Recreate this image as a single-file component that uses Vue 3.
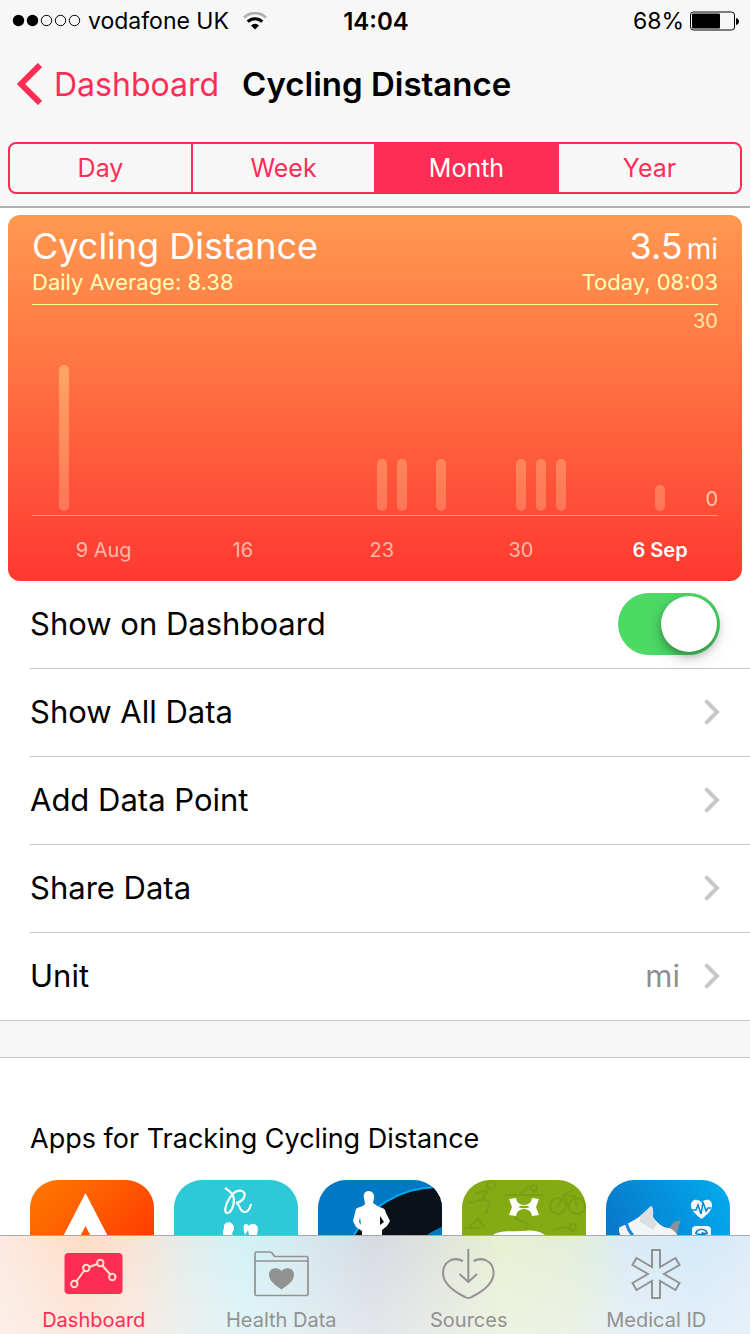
<script setup>
import { ref } from 'vue'

const ranges = ['Day', 'Week', 'Month', 'Year']
const activeRange = ref('Month')
const showOnDashboard = ref(true)

// day is the column in the 31 day grid, height is in pixels
const bars = [
  { day: 1, height: 146 },
  { day: 17, height: 52 },
  { day: 18, height: 52 },
  { day: 20, height: 52 },
  { day: 24, height: 52 },
  { day: 25, height: 52 },
  { day: 26, height: 52 },
  { day: 31, height: 26 }
]

const dates = [
  { day: 3, label: '9 Aug' },
  { day: 10, label: '16' },
  { day: 17, label: '23' },
  { day: 24, label: '30' },
  { day: 31, label: '6 Sep', current: true }
]

const rows = [
  { label: 'Show All Data' },
  { label: 'Add Data Point' },
  { label: 'Share Data' },
  { label: 'Unit', value: 'mi' }
]

const activeTab = ref('Dashboard')
</script>

<template>
  <div class="screen">
    <header class="header">
      <div class="status">
        <div class="status-left">
          <svg class="signal" width="70" height="14" viewBox="0 0 70 14">
            <circle cx="6.5" cy="6.5" r="5.7" fill="#000" />
            <circle cx="20.5" cy="6.5" r="5.7" fill="#000" />
            <g fill="none" stroke="#000">
              <circle cx="34.5" cy="6.5" r="5.2" />
              <circle cx="48.5" cy="6.5" r="5.2" />
              <circle cx="62.5" cy="6.5" r="5.2" />
            </g>
          </svg>
          <span>vodafone UK</span>
          <svg class="wifi" width="24" height="18" viewBox="0 0 24 18">
            <path d="M1 5.5a16 16 0 0 1 22 0" fill="none" stroke="#b0b0b0" stroke-width="2.8" />
            <path d="M4.7 9.6a10.5 10.5 0 0 1 14.6 0" fill="none" stroke="#000" stroke-width="3" />
            <path d="M8 13.4a5.8 5.8 0 0 1 8 0L12 17.5z" fill="#000" />
          </svg>
        </div>
        <span class="time">14:04</span>
        <div class="status-right">
          <span>68%</span>
          <svg width="50" height="20" viewBox="0 0 50 20">
            <rect x="0.5" y="1" width="44" height="18" rx="3" fill="none" stroke="#000" />
            <rect x="2" y="2.5" width="28" height="15" rx="1" fill="#000" />
            <path d="M46 7c4 1 4 6 0 7z" fill="#000" />
          </svg>
        </div>
      </div>

      <nav class="nav">
        <a href="#" class="back">
          <svg width="26" height="42" viewBox="0 0 26 42">
            <path d="M24 2L5 21l19 19" fill="none" stroke="currentColor" stroke-width="6" />
          </svg>
          <span>Dashboard</span>
        </a>
        <h1>Cycling Distance</h1>
      </nav>

      <div class="segments">
        <button
          v-for="range in ranges"
          :key="range"
          type="button"
          :class="{ active: range === activeRange }"
          :aria-pressed="range === activeRange"
          @click="activeRange = range"
        >
          {{ range }}
        </button>
      </div>
    </header>

    <main>
      <section class="card">
        <div class="card-line">
          <h2>Cycling Distance</h2>
          <p class="total">3.5<span>mi</span></p>
        </div>
        <div class="card-line sub">
          <span>Daily Average: 8.38</span>
          <span>Today, 08:03</span>
        </div>
        <div class="plot">
          <div class="bars">
            <div
              v-for="bar in bars"
              :key="bar.day"
              class="bar"
              :style="{ gridColumn: bar.day, height: bar.height + 'px' }"
            ></div>
          </div>
          <div class="scale">
            <span>30</span>
            <span class="low">0</span>
          </div>
        </div>
        <div class="dates">
          <span
            v-for="date in dates"
            :key="date.day"
            :class="{ current: date.current }"
            :style="{ gridColumn: date.day }"
          >{{ date.label }}</span>
        </div>
      </section>

      <ul class="list">
        <li>
          <label class="row">
            <span class="label">Show on Dashboard</span>
            <input v-model="showOnDashboard" type="checkbox" class="switch" />
          </label>
        </li>
        <li v-for="row in rows" :key="row.label">
          <button type="button" class="row">
            <span class="label">{{ row.label }}</span>
            <span v-if="row.value" class="value">{{ row.value }}</span>
            <svg width="18" height="28" viewBox="0 0 18 28">
              <path d="M3.5 2.5L15 14 3.5 25.5" fill="none" stroke="#c7c7cc" stroke-width="4" />
            </svg>
          </button>
        </li>
      </ul>
      <div class="divider"></div>

      <section class="apps">
        <h3>Apps for Tracking Cycling Distance</h3>
        <div class="app-row">
          <a href="#" aria-label="Ride tracker">
            <svg viewBox="0 0 124 124">
              <defs>
                <linearGradient id="orange" x1="0" y1="0" x2="1" y2="1">
                  <stop offset="0" stop-color="#ff7b00" />
                  <stop offset="0.7" stop-color="#ff3f00" />
                </linearGradient>
              </defs>
              <rect width="124" height="124" fill="url(#orange)" />
              <path d="M55.5 13L86 72H69L55.5 46 42 72H25z" fill="#fff" />
            </svg>
          </a>
          <a href="#" aria-label="Running log">
            <svg viewBox="0 0 124 124">
              <rect width="124" height="124" fill="#2dc9d7" />
              <path
                d="M51 8c5 3 9 7 9 12 0 6-3 13-7 13-3 0-2-8 2-14 4-7 9-9 13-8 5 2 3 10-6 12 4 0 3 9 9 9 3 0 5-4 6-8"
                fill="none"
                stroke="#fff"
                stroke-width="2.2"
              />
              <path d="M50 48c-1-7 9-8 10 0 0 3-2 4-2 6l8 6H44c1-3 5-4 6-5-2 0-1-4 0-7z" fill="#fff" />
              <path d="M70 45c1-2 4-1 5 1 3-4 8-2 9 2l-1 7 4 5H70l5-5-1-5c-1 2-2 3-3 5-1-3-2-7-1-10z" fill="#fff" />
            </svg>
          </a>
          <a href="#" aria-label="Fitness coach">
            <svg viewBox="0 0 124 124">
              <rect width="124" height="124" fill="#0078c4" />
              <path d="M32 63C50 25 84 7 124 7v40c-10 4-18 9-24 16z" fill="#0a1118" />
              <path d="M32 63C50 25 84 8 118 7" fill="none" stroke="#00a8f0" stroke-width="2" />
              <path
                fill-rule="evenodd"
                d="M50.5 11c4 0 6 3 5.5 7l-1 5 6 4c5 1 6 2 7 6l4 8-3 5-5 4v8H44v-7l-6-4-3-6 3-12c2-2 7-2 9-5l-1-6c-1-4 1-7 4.500-7zM42 37l-1 5 2 3zM62 36v9l4-3z"
                fill="#fff"
              />
            </svg>
          </a>
          <a href="#" aria-label="Ride map">
            <svg viewBox="0 0 124 124">
              <rect width="124" height="124" fill="#84aa14" />
              <g fill="none" stroke="#7a9f13" stroke-width="2">
                <circle cx="96" cy="26" r="8" />
                <circle cx="115" cy="26" r="8" />
                <path d="M96 26l6-11 10 1 3 10M102 15l10-6M103 17l4 10" />
                <circle cx="29" cy="5" r="4" />
                <path d="M25 10l-12 4M26 10l-6 10-14 3M21 18l7 5-4 11M2 48h16M8 46l8-7 6 8" />
                <circle cx="72" cy="8" r="3" />
                <path d="M43 15h38M58 13l10-7M52 38l14 6-6 12M91 50l13-3 8 6" />
                <circle cx="111" cy="47" r="3" />
              </g>
              <path
                d="M47 19l7-1q1 7 8 7t8-7l7 1-3 8 3 8-7 1q-1-7-8-7t-8 7l-7-1 3-8zM56 27q6 2.500 12 0-6-2.500-12 0z"
                fill="#fff"
                fill-rule="evenodd"
              />
              <path d="M32 54c10-4 18-2 27-3 10-1 17-1 24 4v20H32z" fill="#fff" />
            </svg>
          </a>
          <a href="#" aria-label="Step counter">
            <svg viewBox="0 0 124 124">
              <defs>
                <linearGradient id="blue" x1="0" y1="0.5" x2="1" y2="0">
                  <stop offset="0" stop-color="#0875c8" />
                  <stop offset="1" stop-color="#02acee" />
                </linearGradient>
              </defs>
              <rect width="124" height="124" fill="url(#blue)" />
              <path d="M61 51l7-9 7-2-3 8-1 9H61z" fill="#8b9298" />
              <path d="M14 47c10-4 26-13 31-21 3 2 2 8 2 11 4 6 10 11 16 11 5 2 8 5 9 10H16c-3-5-4-9-2-11z" fill="#f3f4f5" />
              <path d="M34 36l11-10c3 2 2 8 2 11l4 7-4 6-13-8z" fill="#dcdfe1" />
              <path d="M20 43q2 7 7 13" fill="none" stroke="#1689db" stroke-width="3" />
              <path d="M95.5 39C88 33 85 30 85 25c0-6 8-7 10.500-2 3-5 10.500-4 10.500 2 0 5-3 8-10.500 14z" fill="#f4f9fc" />
              <path d="M86 30h4l2-5 3 9 2-12 3 9 2-3h3" fill="none" stroke="#0b83cf" stroke-width="1.5" />
              <rect x="86" y="46" width="19" height="20" rx="4" fill="#f4f9fc" />
              <path d="M89 54c0-7 13-7 13 0l-3 1h-7z" fill="#0b83cf" />
              <path d="M91 53c1-4 8-4 9 0l-4-1-1 2z" fill="#f4f9fc" />
            </svg>
          </a>
        </div>
      </section>
    </main>

    <nav class="tabs">
      <a href="#" :class="{ active: activeTab === 'Dashboard' }" @click.prevent="activeTab = 'Dashboard'">
        <svg width="60" height="52" viewBox="0 0 60 52">
          <rect x="0.5" y="5" width="58" height="41" rx="4" fill="currentColor" />
          <g fill="none" stroke="#ffe0cc" stroke-width="2">
            <path d="M12.3 33.5l8-11M25.3 19l8-3M38.3 17.5l8 9" />
            <circle cx="10.3" cy="36" r="3.2" />
            <circle cx="22.3" cy="20" r="3.2" />
            <circle cx="36.3" cy="15" r="3.2" />
            <circle cx="48.3" cy="29" r="3.2" />
          </g>
        </svg>
        <span>Dashboard</span>
      </a>
      <a href="#" :class="{ active: activeTab === 'Health Data' }" @click.prevent="activeTab = 'Health Data'">
        <svg width="60" height="52" viewBox="0 0 60 52">
          <path
            d="M5.5 4H19q1.5 0 2.5 1.5l2 3H55.500q1.500 0 1.500 1.500V46q0 1.500-1.500 1.500H5.500Q4 47.500 4 46V5.500Q4 4 5.500 4zM4 13h53"
            fill="none"
            stroke="currentColor"
            stroke-width="1.7"
          />
          <path d="M30.5 41.5C24 37 18 33 18 26.500c0-7 9-8 12.500-3.500 3.500-4.500 12.500-3.500 12.500 3.500 0 6.500-6 10.500-12.500 15z" fill="currentColor" />
        </svg>
        <span>Health Data</span>
      </a>
      <a href="#" :class="{ active: activeTab === 'Sources' }" @click.prevent="activeTab = 'Sources'">
        <svg width="60" height="52" viewBox="0 0 60 52">
          <g fill="none" stroke="currentColor" stroke-width="2">
            <path d="M24 13C14 8 4 14 4 25c0 11 12 19 22 24q3.300 2 6.600 0c10-5 22-13 22-24 0-11-10-17-20-12" />
            <path d="M29.3 1v32.5M20.5 26l8.800 8 8.800-8" />
          </g>
        </svg>
        <span>Sources</span>
      </a>
      <a href="#" :class="{ active: activeTab === 'Medical ID' }" @click.prevent="activeTab = 'Medical ID'">
        <svg width="60" height="52" viewBox="-30 -26 60 52">
          <path
            d="M-4-7V-24H4V-7L19.500-16 23.500-9 8 0 23.500 9 19.500 16 4 7V24H-4V7L-19.500 16-23.500 9-8 0-23.500-9-19.500-16z"
            fill="none"
            stroke="currentColor"
            stroke-width="2"
          />
        </svg>
        <span>Medical ID</span>
      </a>
    </nav>
  </div>
</template>

<style>
body {
  margin: 0;
  background: #fff;
}
</style>

<style scoped>
.screen {
  min-height: 100vh;
  font-family: Inter, "Liberation Sans", sans-serif;
  color: #000;
}

.screen * {
  box-sizing: border-box;
}

h1,
h2,
h3,
p,
ul {
  margin: 0;
  padding: 0;
  font-weight: 400;
}

a {
  color: inherit;
  text-decoration: none;
}

button {
  font: inherit;
  background: none;
  border: none;
  cursor: pointer;
}

svg {
  display: block;
}

.header {
  background: #f7f7f7;
  border-bottom: 2px solid #b2b2b2;
  padding-bottom: 12px;
}

.status {
  display: grid;
  grid-template-columns: 1fr auto 1fr;
  align-items: center;
  height: 42px;
  padding: 0 10px 0 12px;
  font-size: 23px;
}

.status-left,
.status-right {
  display: flex;
  align-items: center;
}

.status-left {
  gap: 6px;
}

.wifi {
  margin-left: 8px;
}

.status-right {
  justify-content: flex-end;
  gap: 6px;
}

.time {
  font-size: 24px;
  font-weight: 600;
}

.nav {
  display: flex;
  align-items: center;
  gap: 23px;
  height: 84px;
  padding: 0 16px;
}

.back {
  display: flex;
  align-items: center;
  gap: 12px;
  color: #ff2d55;
  font-size: 32px;
}

.nav h1 {
  font-size: 33px;
  font-weight: 600;
}

.segments {
  display: flex;
  height: 52px;
  margin: 16px 8px 0;
  border: 2px solid #ff2d55;
  border-radius: 8px;
  overflow: hidden;
}

.segments button {
  flex: 1;
  padding: 0;
  color: #ff2d55;
  font-size: 25px;
}

.segments button + button {
  border-left: 2px solid #ff2d55;
}

.segments .active {
  background: #ff2d55;
  color: #fff;
}

.card {
  height: 366px;
  margin: 7px 8px 0;
  padding: 10px 24px 0;
  border-radius: 12px;
  background: linear-gradient(#ff9950, #ff6a40 52%, #ff3830);
  color: #fff;
}

.card-line {
  display: flex;
  justify-content: space-between;
  align-items: baseline;
  line-height: 42px;
}

.card-line h2,
.total {
  font-size: 36px;
}

.total span {
  margin-left: 4px;
  font-size: 28px;
}

.sub {
  line-height: 24px;
  color: #ffffb8;
  font-size: 22px;
}

.plot {
  display: flex;
  height: 212px;
  margin-top: 10px;
  padding-left: 22px;
  border-top: 1px solid #ffff8c;
  border-bottom: 1px solid #ffa066;
}

.bars,
.dates {
  display: grid;
  grid-template-columns: repeat(31, minmax(0, 1fr));
}

.bars {
  flex: 1;
  align-items: end;
  padding-bottom: 4px;
}

.bar {
  grid-row: 1;
  justify-self: center;
  width: 10px;
  border-radius: 5px;
  background: linear-gradient(#ffa565, #ff7556) bottom / 100% 146px no-repeat;
}

.scale {
  display: flex;
  flex-direction: column;
  justify-content: space-between;
  width: 48px;
  padding: 4px 0;
  text-align: right;
  line-height: 24px;
  font-size: 20px;
  color: #ffe8a8;
}

.scale .low {
  color: #ffc8b0;
}

.dates {
  margin: 22px 48px 0 22px;
  line-height: 24px;
  font-size: 20px;
  color: #ffb8a8;
}

.dates span {
  display: flex;
  justify-content: center;
  white-space: nowrap;
}

.dates .current {
  color: #fff;
  font-weight: 600;
}

.list {
  padding-left: 30px;
  list-style: none;
}

.list li + li {
  border-top: 1px solid #c8c7cc;
}

.row {
  display: flex;
  align-items: center;
  width: 100%;
  height: 87px;
  padding: 0 30px 2px 0;
  text-align: left;
  font-size: 31px;
}

.label {
  flex: 1;
}

.value {
  margin-right: 22px;
  color: #8e8e93;
}

.switch {
  appearance: none;
  display: flex;
  width: 102px;
  height: 62px;
  margin: 0;
  padding: 3px;
  border-radius: 31px;
  background: #e5e5ea;
  cursor: pointer;
}

.switch::before {
  content: "";
  width: 56px;
  height: 56px;
  border-radius: 50%;
  background: #fff;
  box-shadow: 0 4px 8px rgba(0, 0, 0, 0.3), 0 6px 20px rgba(0, 0, 0, 0.12);
}

.switch:checked {
  justify-content: flex-end;
  background: #4cd964;
}

.divider {
  height: 38px;
  border-top: 1px solid #c8c7cc;
  border-bottom: 1px solid #c8c7cc;
  background: #f6f6f6;
}

.apps {
  padding: 64px 20px 30px 30px;
}

.apps h3 {
  line-height: 34px;
  font-size: 27px;
}

.app-row {
  display: grid;
  grid-template-columns: repeat(5, 1fr);
  gap: 20px;
  margin-top: 24px;
}

.app-row svg {
  width: 100%;
  border-radius: 28px;
}

.tabs {
  position: fixed;
  right: 0;
  bottom: 0;
  left: 0;
  display: grid;
  grid-template-columns: repeat(4, 1fr);
  height: 99px;
  padding-top: 12px;
  border-top: 1px solid #a9a9ac;
  background:
    linear-gradient(rgba(248, 248, 248, 0), rgba(248, 248, 248, 0.4)),
    linear-gradient(
      90deg,
      #fdeae0,
      #ffdcc6 11%,
      #fbe2d2 17%,
      #e6ebe8 24%,
      #d2f2f6 32%,
      #d4ecf2 38%,
      #d7dae2 50%,
      #dfe3dc 58%,
      #e8f0d2 67%,
      #e4eed8 76%,
      #d9ebf6 84%,
      #d4eafa 93%,
      #dcecf8
    );
  color: #929292;
}

.tabs a {
  display: flex;
  flex-direction: column;
  align-items: center;
  gap: 8px;
  line-height: 24px;
  font-size: 20px;
}

.tabs .active {
  color: #ff2d55;
}
</style>
